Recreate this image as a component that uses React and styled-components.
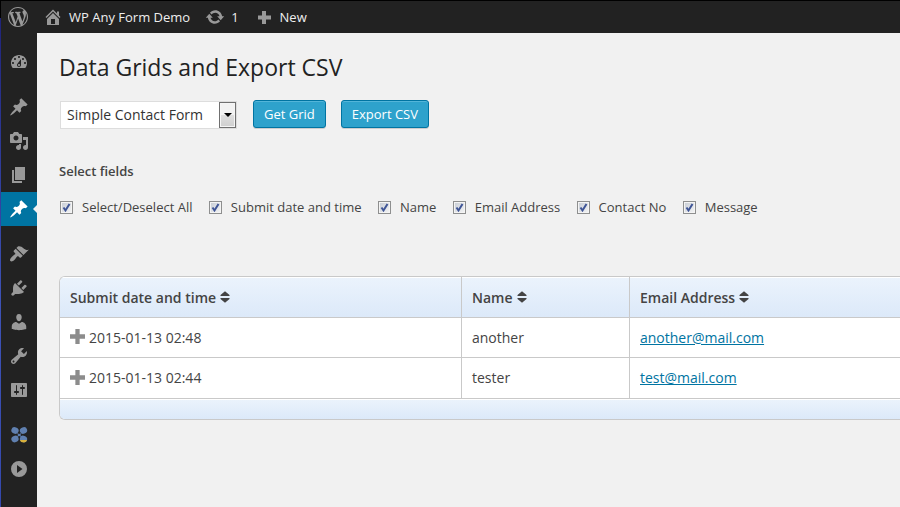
import React, { Fragment } from "react";
import styled, { createGlobalStyle } from "styled-components";

const GlobalStyle = createGlobalStyle`
  *, *::before, *::after { box-sizing: border-box; }
  body {
    margin: 0;
    background: #f1f1f1;
    color: #444;
    font: 13px/20px "Open Sans", sans-serif;
    overflow-x: hidden;
  }
`;

/* Dashicons outlines on a 20 x 20 grid */
const paths = {
  wordpress:
    "M20 10c0-5.51-4.49-10-10-10C4.48 0 0 4.49 0 10c0 5.52 4.48 10 10 10 5.51 0 10-4.48 10-10zM7.78 15.37L4.37 6.22c.55-.02 1.17-.08 1.17-.08.5-.06.44-1.13-.06-1.11 0 0-1.45.11-2.37.11-.18 0-.37 0-.58-.01C4.12 2.69 6.87 1.11 10 1.11c2.33 0 4.45.87 6.05 2.34-.68-.11-1.65.39-1.65 1.58 0 .74.45 1.36.9 2.1.35.61.55 1.36.55 2.46 0 1.49-1.4 5-1.4 5l-3.03-8.37c.54-.02.82-.17.82-.17.5-.05.44-1.25-.06-1.22 0 0-1.44.12-2.38.12-.87 0-2.33-.12-2.33-.12-.5-.03-.56 1.2-.06 1.22l.92.08 1.26 3.41zM17.41 10c.24-.64.74-1.87.43-4.25.7 1.29 1.05 2.71 1.05 4.25 0 3.29-1.73 6.24-4.4 7.78.97-2.59 1.94-5.2 2.92-7.78zM6.1 18.09C3.12 16.65 1.11 13.53 1.11 10c0-1.3.23-2.48.72-3.59C3.25 10.3 4.67 14.2 6.1 18.09zm4.03-6.63l2.58 6.98c-.86.29-1.76.45-2.71.45-.79 0-1.57-.11-2.29-.33.81-2.38 1.62-4.74 2.42-7.1z",
  home:
    "M16 8.5l1.53 1.53-1.06 1.06L10 4.6l-6.47 6.49-1.06-1.06L10 2.5l4 4v-2h2v4zm-6-2.46l6 5.99V18H4v-5.97zM12 17v-5H8v5h4z",
  update:
    "M10.2 3.28c3.53 0 6.43 2.61 6.92 6h2.08l-3.5 4-3.5-4h2.32c-.45-1.97-2.21-3.45-4.32-3.45-1.45 0-2.73.71-3.54 1.78L4.95 5.66C6.23 4.2 8.11 3.28 10.2 3.28zm-.4 13.44c-3.52 0-6.43-2.61-6.92-6H.8l3.5-4c1.17 1.33 2.33 2.67 3.5 4H5.48c.45 1.97 2.21 3.45 4.32 3.45 1.45 0 2.73-.71 3.54-1.78l1.71 1.95c-1.28 1.46-3.15 2.38-5.25 2.38z",
  plus: "M8 4h4v4.500h5v4h-5V17H8v-4.500H4v-4h4z",
  expand: "M8 3h4v5h5v4h-5v5H8v-5H3V8h5z",
  dashboard:
    "M3.76 16h12.48c1.1-1.37 1.76-3.11 1.76-5 0-4.42-3.58-8-8-8s-8 3.58-8 8c0 1.89.66 3.63 1.76 5zM10 4c.55 0 1 .45 1 1s-.45 1-1 1-1-.45-1-1 .45-1 1-1zM6 6c.55 0 1 .45 1 1s-.45 1-1 1-1-.45-1-1 .45-1 1-1zm8 0c.55 0 1 .45 1 1s-.45 1-1 1-1-.45-1-1 .45-1 1-1zm-5.37 5.55L12 7v6c0 1.1-.9 2-2 2s-2-.9-2-2c0-.57.24-1.08.63-1.45zM4 10c.55 0 1 .45 1 1s-.45 1-1 1-1-.45-1-1 .45-1 1-1zm12 0c.55 0 1 .45 1 1s-.45 1-1 1-1-.45-1-1 .45-1 1-1zm-5 3c0-.55-.45-1-1-1s-1 .45-1 1 .45 1 1 1 1-.45 1-1z",
  pin:
    "M10.44 3.02l1.82-1.82 6.36 6.35-1.83 1.82c-1.05-.68-2.48-.57-3.41.36l-.75.75c-.92.93-1.04 2.35-.35 3.41l-1.83 1.82-2.41-2.41-2.8 2.79c-.42.42-3.38 2.71-3.8 2.29s1.86-3.39 2.28-3.81l2.79-2.79L4.1 9.36l1.83-1.82c1.05.69 2.48.57 3.4-.36l.75-.75c.93-.92 1.05-2.35.36-3.41z",
  media:
    "M13 11V4c0-.55-.45-1-1-1h-1.67L9 1H5L3.67 3H2c-.55 0-1 .45-1 1v7c0 .55.45 1 1 1h10c.55 0 1-.45 1-1zM7 4.5c1.38 0 2.5 1.12 2.5 2.5S8.38 9.5 7 9.5 4.5 8.38 4.5 7 5.62 4.5 7 4.5zM14 6h5v10.5c0 1.38-1.12 2.5-2.5 2.5S14 17.88 14 16.5s1.12-2.5 2.5-2.5c.17 0 .34.02.5.05V9h-3V6zm-4 8.05V13h2v3.5c0 1.38-1.12 2.5-2.5 2.5S7 17.88 7 16.5 8.12 14 9.5 14c.17 0 .34.02.5.05z",
  page: "M6 15V2h10v13H6zm-1 1h8v2H3V5h2v11z",
  appearance:
    "M14.48 11.06L7.41 3.99l1.5-1.5c.5-.56 2.3-.47 3.51.32 1.21.8 1.43 1.28 2.91 2.1 1.18.64 2.45 1.26 4.45.85zm-.71.71L6.7 4.7 4.93 6.47c-.39.39-.39 1.02 0 1.41l1.06 1.06c.39.39.39 1.03 0 1.42-.6.6-1.43 1.11-2.21 1.69-.35.26-.7.53-1.01.84C1.43 14.23.4 16.08 1.4 17.07c.99 1 2.84-.03 4.18-1.36.31-.31.58-.66.85-1.02.57-.78 1.08-1.61 1.69-2.21.39-.39 1.02-.39 1.41 0l1.06 1.06c.39.39 1.02.39 1.41 0z",
  plugins:
    "M13.11 4.36L9.87 7.6 8 5.73l3.24-3.24c.35-.34 1.05-.2 1.56.32.52.51.66 1.21.31 1.55zm-8 1.77l.91-1.12 9.01 9.01-1.19.84c-.71.71-2.63 1.16-3.82 1.16H6.14L4.9 17.26c-.59.59-1.54.59-2.12 0-.59-.58-.59-1.53 0-2.12l1.24-1.24v-3.88c0-1.13.4-3.19 1.09-3.89zm7.26 3.97l3.24-3.24c.34-.35 1.04-.21 1.55.31.52.51.66 1.21.31 1.55l-3.24 3.25z",
  users:
    "M10 9.25c-2.27 0-2.73-3.44-2.73-3.44C7 4.02 7.82 2 9.97 2c2.16 0 2.98 2.02 2.71 3.81 0 0-.41 3.44-2.68 3.44zm0 2.57L12.72 10c2.39 0 4.52 2.33 4.52 4.53v2.49s-3.65 1.13-7.24 1.13c-3.65 0-7.24-1.13-7.24-1.13v-2.49c0-2.25 1.94-4.48 4.47-4.48z",
  tools:
    "M16.68 9.77c-1.34 1.34-3.3 1.67-4.95.99l-5.41 6.52c-.99.99-2.59.99-3.58 0s-.99-2.59 0-3.57l6.52-5.42c-.68-1.65-.35-3.61.99-4.95 1.28-1.28 3.12-1.62 4.72-1.06l-2.89 2.89 2.82 2.82 2.86-2.87c.53 1.58.18 3.39-1.08 4.65zM3.81 16.21c.4.39 1.04.39 1.43 0 .4-.4.4-1.04 0-1.43-.39-.4-1.03-.4-1.43 0-.39.39-.39 1.03 0 1.43z",
  settings:
    "M18 16V4c0-.55-.45-1-1-1H3c-.55 0-1 .45-1 1v12c0 .55.45 1 1 1h14c.55 0 1-.45 1-1zM8 11h1c.55 0 1 .45 1 1s-.45 1-1 1H8v1.5c0 .28-.22.5-.5.5s-.5-.22-.5-.5V13H6c-.55 0-1-.45-1-1s.45-1 1-1h1V5.5c0-.28.22-.5.5-.5s.5.22.5.5V11zm5-2h-1c-.55 0-1-.45-1-1s.45-1 1-1h1V5.5c0-.28.22-.5.5-.5s.5.22.5.5V7h1c.55 0 1 .45 1 1s-.45 1-1 1h-1v5.5c0 .28-.22.5-.5.5s-.5-.22-.5-.5V9z",
  collapse: "M10 2a8 8 0 1 0 0 16 8 8 0 0 0 0-16zM8 6l5.5 4L8 14z",
};

const Svg = styled.svg`
  width: 20px;
  height: 20px;
  flex: none;
  fill: currentColor;
  fill-rule: evenodd;
`;

const Icon = ({ name }) => (
  <Svg viewBox="0 0 20 20" aria-hidden="true">
    <path d={paths[name]} />
  </Svg>
);

const PetalsIcon = () => (
  <Svg viewBox="0 0 20 20" aria-hidden="true">
    <g fill="#6080b0">
      <ellipse cx="6" cy="5.5" rx="3.700" ry="3.200" transform="rotate(20 6 5.500)" />
      <ellipse cx="14.500" cy="5.500" rx="3.700" ry="3.200" transform="rotate(-20 14.500 5.500)" />
      <ellipse cx="6" cy="14" rx="3.700" ry="3.200" transform="rotate(-20 6 14)" />
      <ellipse cx="14.500" cy="14" rx="3.700" ry="3.200" transform="rotate(20 14.500 14)" />
      <path d="M8 8l2.200 1L12.500 8l-1 2 1 2-2.300-1L8 12l1-2z" />
    </g>
    <path fill="#d9b13b" d="M11 15h7c-.5 1.800-1.800 2.500-3.500 2.500S11.500 16.800 11 15z" />
  </Svg>
);

const Screen = styled.div`
  min-height: 100vh;
  display: flex;
  flex-direction: column;
  padding-left: 1px;
  border-top: 1px solid #000;
  background: linear-gradient(#000 17px, #20247a 17px, #3d52b6 60%, #3448ac);
`;

const AdminBar = styled.header`
  display: flex;
  align-items: center;
  height: 32px;
  padding-left: 7px;
  background: #222;
`;

const BarLink = styled.a`
  display: flex;
  align-items: center;
  gap: 6px;
  margin-right: 15px;
  color: #eee;
  text-decoration: none;
  svg { color: #999; }
`;

const Body = styled.div`
  flex: 1;
  display: flex;
`;

const Sidebar = styled.nav`
  flex: none;
  width: 36px;
  padding-top: 12px;
  background: #222;
`;

const MenuGroup = styled.ul`
  list-style: none;
  margin: 0 0 11px;
  padding: 0;
`;

const MenuLink = styled.a`
  position: relative;
  display: flex;
  align-items: center;
  justify-content: center;
  height: 34px;
  color: ${(p) => (p.$active ? "#fff" : "#999")};
  background: ${(p) => (p.$active ? "#0074a2" : "transparent")};

  &::after {
    content: "";
    display: ${(p) => (p.$active ? "block" : "none")};
    position: absolute;
    right: 0;
    top: 13px;
    border: 4px solid transparent;
    border-left-width: 0;
    border-right-color: #f1f1f1;
  }
`;

const Content = styled.main`
  flex: 1;
  min-width: 0;
  padding: 19px 0 40px 22px;
  background: #f1f1f1;
  overflow: hidden;
`;

const Title = styled.h1`
  margin: 0 0 18px;
  color: #222;
  font-size: 23px;
  line-height: 30px;
  font-weight: 400;
`;

const Toolbar = styled.div`
  display: flex;
  align-items: flex-start;
  gap: 15px;
`;

const SelectBox = styled.div`
  position: relative;
  margin: 1px 1px 0;
`;

const Select = styled.select`
  appearance: none;
  display: block;
  width: 177px;
  height: 28px;
  padding: 0 24px 1px 6px;
  border: 1px solid #ddd;
  border-radius: 0;
  background: #fff;
  color: #333;
  font: 14px/24px "Open Sans", sans-serif;
`;

const SelectArrow = styled.span`
  position: absolute;
  top: 1px;
  right: 1px;
  width: 17px;
  height: 26px;
  display: flex;
  align-items: center;
  justify-content: center;
  border: 1px solid #707070;
  background: linear-gradient(#f2f2f2 50%, #dedede 50%, #cfcfcf);
  box-shadow: inset 0 0 0 1px #f5f5f5;
  pointer-events: none;

  &::before {
    content: "";
    border: 4px solid transparent;
    border-top-color: #000;
    border-bottom-width: 0;
  }
`;

const Button = styled.button`
  height: 28px;
  padding: 0 10px;
  border: 1px solid #0074a2;
  border-radius: 3px;
  background: #2ea2cc;
  box-shadow: inset 0 1px 0 rgba(120, 200, 230, 0.5), 0 1px 0 rgba(0, 0, 0, 0.15);
  color: #fff;
  font: 13px/26px "Open Sans", sans-serif;
`;

const Fields = styled.fieldset`
  margin: 32px 0 0;
  padding: 0;
  border: 0;
`;

const Legend = styled.legend`
  padding: 0;
  font-weight: 600;
`;

const CheckRow = styled.div`
  padding: 16px 0 0 1px;
  white-space: nowrap;
`;

const CheckLabel = styled.label`
  display: inline-flex;
  align-items: center;
  gap: 9px;
  margin-right: 13px;
  vertical-align: top;
`;

const tick =
  "data:image/svg+xml," +
  encodeURIComponent(
    '<svg xmlns="http://www.w3.org/2000/svg" viewBox="0 0 11 11"><path d="M2.5 5.500L4.500 8.500 8.500 2" fill="none" stroke="#3f5596" stroke-width="2"/></svg>'
  );

const Checkbox = styled.input`
  appearance: none;
  width: 13px;
  height: 13px;
  margin: 0;
  border: 1px solid #8e8f8f;
  background: linear-gradient(135deg, #c5cbd4, #f6f6f6);
  box-shadow: inset 0 0 0 1px #f4f4f4;

  &:checked {
    background: url("${tick}"), linear-gradient(135deg, #c5cbd4, #f6f6f6);
  }
`;

const Table = styled.table`
  width: 100%;
  margin-top: 59px;
  table-layout: fixed;
  border-collapse: separate;
  border-spacing: 0;
  border: 1px solid #c9c9c9;
  border-right: 0;
  border-radius: 6px 0 0 6px;
  overflow: hidden;
  background: #fff;
  font-size: 14px;
`;

const Col = styled.col`
  width: ${(p) => p.$width};
`;

const HeadCell = styled.th`
  height: 41px;
  padding: 1px 10px 0;
  border-bottom: 1px solid #c9c9c9;
  border-left: ${(p) => (p.$first ? "0" : "1px solid #c9c9c9")};
  background: linear-gradient(#ebf3fc, #dce9f9);
  box-shadow: inset 0 1px 0 #fff;
  font-weight: 600;
  text-align: left;
`;

const Cell = styled.td`
  height: ${(p) => p.$height}px;
  padding: 0 10px;
  border-bottom: 1px solid #c9c9c9;
  border-left: ${(p) => (p.$first ? "0" : "1px solid #c9c9c9")};
`;

const FootCell = styled.td`
  height: 20px;
  padding: 0;
  background: linear-gradient(#ebf3fc, #dce9f9);
  box-shadow: inset 0 1px 0 #fff;
`;

const SortButton = styled.button`
  display: flex;
  align-items: center;
  gap: 4px;
  padding: 0;
  border: 0;
  background: none;
  color: inherit;
  font: inherit;
`;

const SortSvg = styled.svg`
  width: 10px;
  height: 12px;
  margin-bottom: 2px;
  fill: #444;
`;

const Expander = styled.div`
  display: flex;
  align-items: center;
  gap: 4px;
`;

const ExpandButton = styled.button`
  display: flex;
  padding: 0 0 2px;
  border: 0;
  background: none;
  color: #8c8c8c;
  svg { width: 15px; height: 15px; }
`;

const MailLink = styled.a`
  color: #0074a2;
`;

const SortHeading = ({ first, children }) => (
  <HeadCell $first={first} scope="col">
    <SortButton type="button">
      {children}
      <SortSvg viewBox="0 0 10 12" aria-hidden="true">
        <path d="M5 0.300L9.500 4v1H.5V4zM5 11.700L.5 8V7h9v1z" />
      </SortSvg>
    </SortButton>
  </HeadCell>
);

const menu = [
  [{ icon: "dashboard", label: "Dashboard" }],
  [
    { icon: "pin", label: "Posts" },
    { icon: "media", label: "Media" },
    { icon: "page", label: "Pages" },
    { icon: "pin", label: "Forms", active: true },
  ],
  [
    { icon: "appearance", label: "Appearance" },
    { icon: "plugins", label: "Plugins" },
    { icon: "users", label: "Users" },
    { icon: "tools", label: "Tools" },
    { icon: "settings", label: "Settings" },
  ],
  [
    { icon: "petals", label: "Extensions" },
    { icon: "collapse", label: "Expand menu" },
  ],
];

const fields = [
  "Select/Deselect All",
  "Submit date and time",
  "Name",
  "Email Address",
  "Contact No",
  "Message",
];

const rows = [
  { date: "2015-01-13 02:48", name: "another", email: "another@mail.com", height: 40 },
  { date: "2015-01-13 02:44", name: "tester", email: "test@mail.com", height: 41 },
];

export default function App() {
  return (
    <>
      <GlobalStyle />
      <Screen>
        <AdminBar>
          <BarLink href="#wordpress" aria-label="WordPress">
            <Icon name="wordpress" />
          </BarLink>
          <BarLink href="#site">
            <Icon name="home" />
            WP Any Form Demo
          </BarLink>
          <BarLink href="#updates">
            <Icon name="update" />
            1
          </BarLink>
          <BarLink href="#new">
            <Icon name="plus" />
            New
          </BarLink>
        </AdminBar>
        <Body>
          <Sidebar aria-label="Admin menu">
            {menu.map((group, i) => (
              <MenuGroup key={i}>
                {group.map((item) => (
                  <li key={item.label}>
                    <MenuLink href="#menu" aria-label={item.label} $active={item.active}>
                      {item.icon === "petals" ? <PetalsIcon /> : <Icon name={item.icon} />}
                    </MenuLink>
                  </li>
                ))}
              </MenuGroup>
            ))}
          </Sidebar>
          <Content>
            <Title>Data Grids and Export CSV</Title>
            <Toolbar>
              <SelectBox>
                <Select aria-label="Form">
                  <option>Simple Contact Form</option>
                </Select>
                <SelectArrow />
              </SelectBox>
              <Button type="button">Get Grid</Button>
              <Button type="button">Export CSV</Button>
            </Toolbar>
            <Fields>
              <Legend>Select fields</Legend>
              <CheckRow>
                {fields.map((field) => (
                  <Fragment key={field}>
                    <CheckLabel>
                      <Checkbox type="checkbox" defaultChecked />
                      {field}
                    </CheckLabel>{" "}
                  </Fragment>
                ))}
              </CheckRow>
            </Fields>
            <Table>
              <colgroup>
                <Col $width="401px" />
                <Col $width="168px" />
                <Col $width="auto" />
              </colgroup>
              <thead>
                <tr>
                  <SortHeading first>Submit date and time</SortHeading>
                  <SortHeading>Name</SortHeading>
                  <SortHeading>Email Address</SortHeading>
                </tr>
              </thead>
              <tbody>
                {rows.map((row) => (
                  <tr key={row.date}>
                    <Cell $first $height={row.height}>
                      <Expander>
                        <ExpandButton type="button" aria-label="Show details">
                          <Svg viewBox="3 3 14 14" aria-hidden="true">
                            <path d={paths.expand} />
                          </Svg>
                        </ExpandButton>
                        {row.date}
                      </Expander>
                    </Cell>
                    <Cell $height={row.height}>{row.name}</Cell>
                    <Cell $height={row.height}>
                      <MailLink href={`mailto:${row.email}`}>{row.email}</MailLink>
                    </Cell>
                  </tr>
                ))}
              </tbody>
              <tfoot>
                <tr>
                  <FootCell colSpan={3} />
                </tr>
              </tfoot>
            </Table>
          </Content>
        </Body>
      </Screen>
    </>
  );
}
